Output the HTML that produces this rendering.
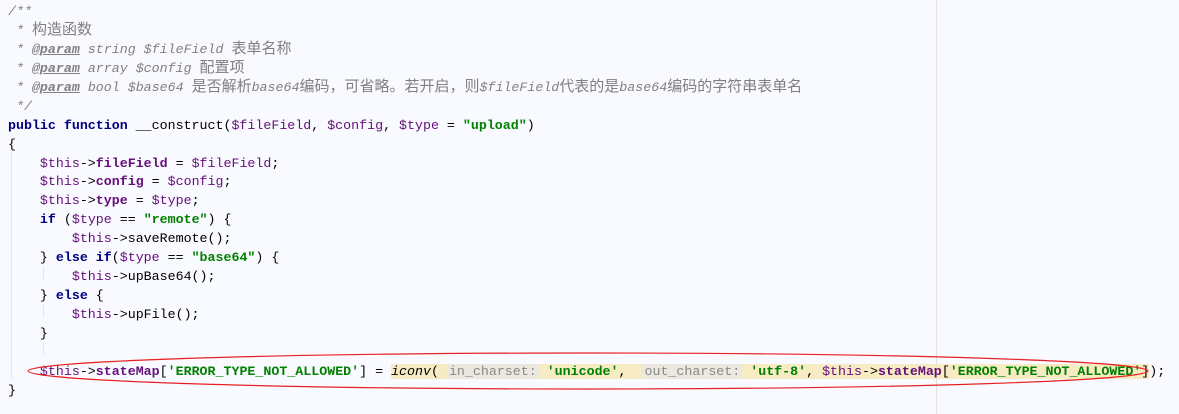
<!DOCTYPE html>
<html><head><meta charset="utf-8"><style>
html,body{margin:0;padding:0;}
body{width:1179px;height:414px;background:#f8faff;position:relative;overflow:hidden;}
.margin{position:absolute;left:936px;top:0;width:1px;height:414px;background:#e2e2e2;}
.code{position:absolute;left:8px;top:3px;font-family:"Liberation Mono","Noto Sans CJK SC",monospace;font-size:13.3px;color:#000;}
.code div{height:18.95px;line-height:18.95px;white-space:pre;overflow:visible;}
.c{color:#808080;font-style:italic;}
.cn{color:#808080;font-style:normal;font-family:"Noto Sans CJK SC",sans-serif;font-size:15px;line-height:10px;}
.t{color:#808080;font-weight:bold;text-decoration:underline;}
.k{color:#000080;font-weight:bold;}
.s{color:#008000;font-weight:bold;}
.v{color:#660e7a;}
.f{color:#660e7a;font-weight:bold;}
.i{font-style:italic;}
.hl{background:#f6ebc3;}
.h{background:#ebe8e0;color:#888;border-radius:3px;padding:0 2px;}
.guide{position:absolute;width:1px;background:#e8e8e8;}
</style></head><body>
<div class="margin"></div>
<div class="guide" style="left:11px;top:152px;height:228px"></div>
<div class="guide" style="left:43px;top:266px;height:14px"></div>
<div class="guide" style="left:43px;top:304px;height:14px"></div>
<div class="guide" style="left:43px;top:342px;height:14px"></div>
<div class="code">
<div class="c">/**</div>
<div class="c"> * <span class="cn">构造函数</span></div>
<div class="c"> * <span class="t">@param</span> string $fileField <span class="cn">表单名称</span></div>
<div class="c"> * <span class="t">@param</span> array $config <span class="cn">配置项</span></div>
<div class="c"> * <span class="t">@param</span> bool $base64 <span class="cn">是否解析</span>base64<span class="cn">编码，可省略。若开启，则</span>$fileField<span class="cn">代表的是</span>base64<span class="cn">编码的字符串表单名</span></div>
<div class="c"> */</div>
<div><span class="k">public function</span> __construct(<span class="v">$fileField</span>, <span class="v">$config</span>, <span class="v">$type</span> = <span class="s">"upload"</span>)</div>
<div>{</div>
<div>    <span class="v">$this</span>-&gt;<span class="f">fileField</span> = <span class="v">$fileField</span>;</div>
<div>    <span class="v">$this</span>-&gt;<span class="f">config</span> = <span class="v">$config</span>;</div>
<div>    <span class="v">$this</span>-&gt;<span class="f">type</span> = <span class="v">$type</span>;</div>
<div>    <span class="k">if</span> (<span class="v">$type</span> == <span class="s">"remote"</span>) {</div>
<div>        <span class="v">$this</span>-&gt;saveRemote();</div>
<div>    } <span class="k">else if</span>(<span class="v">$type</span> == <span class="s">"base64"</span>) {</div>
<div>        <span class="v">$this</span>-&gt;upBase64();</div>
<div>    } <span class="k">else</span> {</div>
<div>        <span class="v">$this</span>-&gt;upFile();</div>
<div>    }</div>
<div> </div>
<div>    <span class="v">$this</span>-&gt;<span class="f">stateMap</span>[<span class="s">'ERROR_TYPE_NOT_ALLOWED'</span>] = <span class="hl"><span class="i">iconv</span>( <span class="h">in_charset:</span> <span class="s">'unicode'</span>,  <span class="h">out_charset:</span> <span class="s">'utf-8'</span>, <span class="v">$this</span>-&gt;<span class="f">stateMap</span>[<span class="s">'ERROR_TYPE_NOT_ALLOWED'</span>]</span>);</div>
<div>}</div>
</div>
<svg style="position:absolute;left:0;top:0" width="1179" height="414"><ellipse cx="588" cy="371" rx="560" ry="18" fill="none" stroke="#e82020" stroke-width="1.2"/></svg>
</body></html>
